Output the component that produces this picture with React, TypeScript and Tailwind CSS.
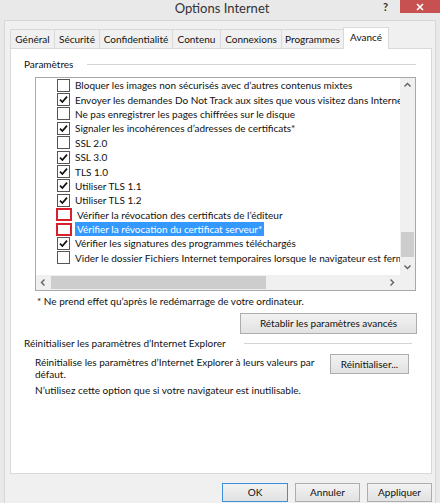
import React from 'react';

// ─── Data ───
const TABS = ['Général', 'Sécurité', 'Confidentialité', 'Contenu', 'Connexions', 'Programmes', 'Avancé'];
const TAB_WIDTHS = ['w-[45px]', 'w-[45px]', 'w-[73px]', 'w-[48px]', 'w-[61px]', 'w-[62px]', 'w-[46px]'];

type Item = { label: string; checked: boolean; flagged?: boolean; selected?: boolean };

const ITEMS: Item[] = [
    { label: 'Bloquer les images non sécurisés avec d’autres contenus mixtes', checked: false },
    { label: 'Envoyer les demandes Do Not Track aux sites que vous visitez dans Internet Explorer*', checked: true },
    { label: 'Ne pas enregistrer les pages chiffrées sur le disque', checked: false },
    { label: 'Signaler les incohérences d’adresses de certificats*', checked: true },
    { label: 'SSL 2.0', checked: false },
    { label: 'SSL 3.0', checked: true },
    { label: 'TLS 1.0', checked: true },
    { label: 'Utiliser TLS 1.1', checked: true },
    { label: 'Utiliser TLS 1.2', checked: true },
    { label: 'Vérifier la révocation des certificats de l’éditeur', checked: false, flagged: true },
    { label: 'Vérifier la révocation du certificat serveur*', checked: false, flagged: true, selected: true },
    { label: 'Vérifier les signatures des programmes téléchargés', checked: true },
    { label: 'Vider le dossier Fichiers Internet temporaires lorsque le navigateur est fermé', checked: false },
];

// ─── Checkbox ───
function Box({ checked, flagged }: { checked: boolean; flagged?: boolean }) {
    if (flagged) {
        return <div className="w-[16px] h-[13px] -ml-[1px] border-2 border-[#d8202c] bg-white shrink-0" />;
    }
    return (
        <div className="w-[13px] h-[13px] border border-[#555555] bg-white shrink-0 flex items-center justify-center">
            {checked && (
                <svg width="11" height="11" viewBox="0 0 11 11">
                    <path d="M2 5.6 L4.4 8 L9 2.6" fill="none" stroke="#111" strokeWidth="1.7" />
                </svg>
            )}
        </div>
    );
}

function Chevron({ dir }: { dir: 'up' | 'down' | 'left' | 'right' }) {
    const d = {
        up: 'M1.5 5.5 L4.5 2.5 L7.5 5.5',
        down: 'M1.5 2.5 L4.5 5.5 L7.5 2.5',
        left: 'M5.5 1.5 L2.5 4.5 L5.5 7.5',
        right: 'M2.5 1.5 L5.5 4.5 L2.5 7.5',
    }[dir];
    return (
        <svg width="9" height="9" viewBox="0 0 9 9">
            <path d={d} fill="none" stroke="#606060" strokeWidth="1.4" />
        </svg>
    );
}

function Btn({ children, className = '' }: { children: React.ReactNode; className?: string }) {
    return (
        <div
            className={`flex items-center justify-center border border-[#adadad] bg-gradient-to-b from-[#f2f2f2] to-[#e2e2e2] text-[10px] text-[#111] ${className}`}
        >
            {children}
        </div>
    );
}

// ─── Main ───
export default function App() {
    return (
        <div
            className="w-[440px] h-[503px] bg-[#e9e9e9] overflow-hidden text-[#111] flex flex-col"
            style={{ fontFamily: 'Lato, "Noto Sans", sans-serif' }}
        >
            {/* Title bar */}
            <div className="relative h-[20px] shrink-0 flex items-start justify-center">
                <span className="text-[13px] leading-[17px] text-[#333] ml-[4px]">Options Internet</span>
                <span className="absolute left-[383px] top-[1px] text-[11px] leading-[12px] font-bold text-[#333]">?</span>
                <div className="absolute right-0 top-0 w-[40px] h-[13px] bg-[#c75050] flex items-center justify-center">
                    <svg width="8" height="8" viewBox="0 0 8 8">
                        <path d="M1 1 L7 7 M7 1 L1 7" stroke="#fff" strokeWidth="1.6" />
                    </svg>
                </div>
            </div>

            {/* Client area */}
            <div className="mx-[4px] flex-1 bg-[#f0f0f0] border-l border-r border-t border-[#d7d7d7] flex flex-col text-[10px]">
                {/* Tabs */}
                <div className="flex items-end h-[27px] pl-[5px] pt-[5px]">
                    {TABS.map((t, i) => {
                        const active = i === TABS.length - 1;
                        return (
                            <div
                                key={t}
                                className={`${TAB_WIDTHS[i]} flex items-center justify-center border-t border-r border-[#d9d9d9] whitespace-nowrap ${
                                    i === 0 ? 'border-l' : ''
                                } ${active ? 'h-[22px] -mb-px bg-white relative z-10 pb-[3px] border-l -ml-px' : 'h-[19px] bg-[#f0f0f0]'}`}
                            >
                                {t}
                            </div>
                        );
                    })}
                </div>

                {/* Panel */}
                <div className="ml-[5px] w-[422px] h-[426px] bg-white border border-[#d9d9d9] flex flex-col">
                    {/* Paramètres */}
                    <div className="mt-[8px] h-[14px] flex items-center pl-[13px]">
                        <span>Paramètres</span>
                        <div className="flex-1 h-px bg-[#d5d5d5] ml-[14px] mr-[15px]" />
                    </div>

                    {/* List box */}
                    <div className="mt-[6px] ml-[24px] w-[381px] h-[214px] border border-[#a9a9a9] flex flex-col">
                        <div className="flex h-[197px]">
                            <div className="flex-1 overflow-hidden">
                                {ITEMS.map((it) => (
                                    <div key={it.label} className="h-[14.4px] flex items-center pl-[21px] whitespace-nowrap">
                                        <Box checked={it.checked} flagged={it.flagged} />
                                        <span
                                            className={`ml-[3px] px-[2px] leading-[14px] ${
                                                it.selected ? 'bg-[#3399ff] text-white' : ''
                                            }`}
                                        >
                                            {it.label}
                                        </span>
                                    </div>
                                ))}
                            </div>
                            {/* vertical scrollbar */}
                            <div className="w-[15px] bg-[#f0f0f0] flex flex-col items-center">
                                <div className="h-[15px] flex items-center justify-center">
                                    <Chevron dir="up" />
                                </div>
                                <div className="flex-1 w-full flex flex-col justify-end px-[1px]">
                                    <div className="h-[25px] bg-[#cdcdcd] mb-[3px]" />
                                </div>
                                <div className="h-[15px] flex items-center justify-center">
                                    <Chevron dir="down" />
                                </div>
                            </div>
                        </div>
                        {/* horizontal scrollbar */}
                        <div className="flex h-[15px]">
                            <div className="flex-1 bg-[#f0f0f0] flex items-center">
                                <div className="w-[15px] flex items-center justify-center">
                                    <Chevron dir="left" />
                                </div>
                                <div className="flex-1 h-full py-[1px]">
                                    <div className="w-[215px] h-full bg-[#cdcdcd]" />
                                </div>
                                <div className="w-[15px] flex items-center justify-center">
                                    <Chevron dir="right" />
                                </div>
                            </div>
                            <div className="w-[15px] bg-[#f0f0f0]" />
                        </div>
                    </div>

                    <p className="mt-[3px] ml-[26px] leading-[14px]">
                        * Ne prend effet qu’après le redémarrage de votre ordinateur.
                    </p>

                    <Btn className="mt-[5px] self-end mr-[14px] w-[177px] h-[21px]">Rétablir les paramètres avancés</Btn>

                    {/* Réinitialiser group */}
                    <div className="mt-[2px] h-[14px] flex items-center pl-[13px]">
                        <span>Réinitialiser les paramètres d’Internet Explorer</span>
                        <div className="flex-1 h-px bg-[#d5d5d5] ml-[18px] mr-[19px]" />
                    </div>

                    <div className="mt-[4px] ml-[24px] flex items-start">
                        <p className="w-[292px] pt-[2px] leading-[12px]">
                            Réinitialise les paramètres d’Internet Explorer à leurs valeurs par défaut.
                        </p>
                        <Btn className="ml-[3px] w-[79px] h-[20px]">Réinitialiser...</Btn>
                    </div>

                    <p className="mt-[3px] ml-[24px] leading-[14px]">
                        N’utilisez cette option que si votre navigateur est inutilisable.
                    </p>
                </div>

                {/* Dialog buttons */}
                <div className="mt-[9px] flex justify-end gap-[7px] mr-[3px]">
                    <Btn className="w-[66px] h-[19px] !border-[#3c8fd8] from-[#eaf3fb] to-[#dfe9f3]">OK</Btn>
                    <Btn className="w-[65px] h-[19px]">Annuler</Btn>
                    <Btn className="w-[65px] h-[19px]">Appliquer</Btn>
                </div>
            </div>
        </div>
    );
}
